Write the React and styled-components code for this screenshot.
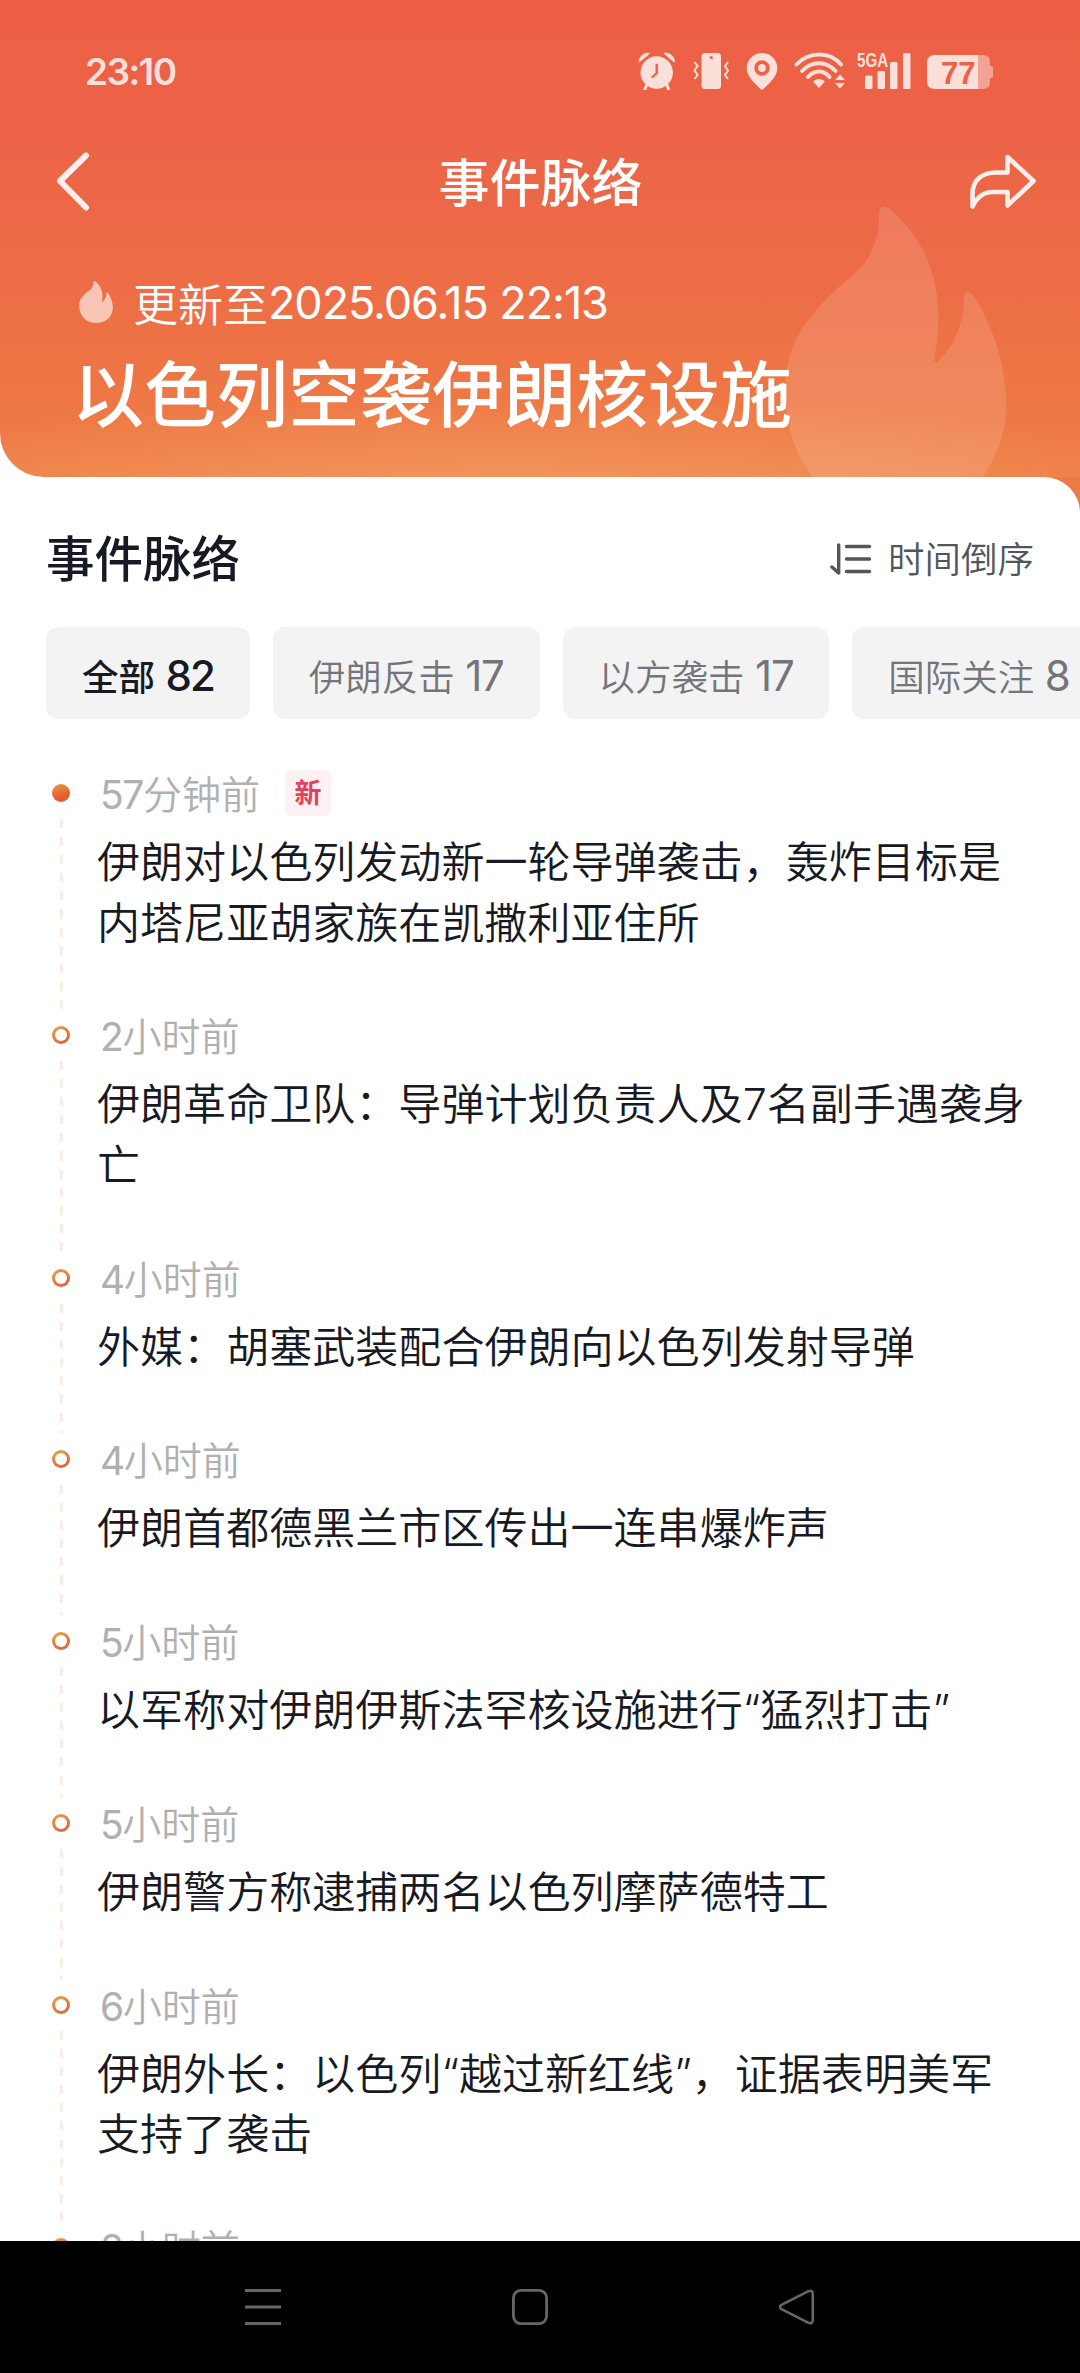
import styled, { createGlobalStyle, css } from "styled-components";

const tabs = [
  { name: "全部", count: 82, active: true },
  { name: "伊朗反击", count: 17 },
  { name: "以方袭击", count: 17 },
  { name: "国际关注", count: 8 },
];

const events = [
  {
    num: "57",
    unit: "分钟前",
    isNew: true,
    title: "伊朗对以色列发动新一轮导弹袭击，轰炸目标是内塔尼亚胡家族在凯撒利亚住所",
  },
  { num: "2", unit: "小时前", title: "伊朗革命卫队：导弹计划负责人及7名副手遇袭身亡" },
  { num: "4", unit: "小时前", title: "外媒：胡塞武装配合伊朗向以色列发射导弹" },
  { num: "4", unit: "小时前", title: "伊朗首都德黑兰市区传出一连串爆炸声" },
  { num: "5", unit: "小时前", title: "以军称对伊朗伊斯法罕核设施进行“猛烈打击”" },
  { num: "5", unit: "小时前", title: "伊朗警方称逮捕两名以色列摩萨德特工" },
  { num: "6", unit: "小时前", title: "伊朗外长：以色列“越过新红线”，证据表明美军支持了袭击" },
  { num: "8", unit: "小时前", title: "" },
];

const FLAME =
  "M290 0C276 0 273 10 273 22C274 60 272 92 243 148C222 190 183 210 132 260C70 320 0 400 -8 520C-16 640 20 745 90 830C150 900 240 930 325 930C430 930 530 890 585 810C640 730 656 660 655 580C654 470 612 350 558 268C552 258 546 254 540 254C533 254 529 260 529 270C529 340 505 410 452 463C446 470 439 469 439 460C439 446 452 400 452 330C452 220 415 100 310 10C304 4 298 0 290 0Z";

function FlameIcon() {
  return (
    <svg viewBox="-12 0 670 930" width="100%" height="100%" preserveAspectRatio="none">
      <path d={FLAME} fill="#fff" />
    </svg>
  );
}

function StatusIcons() {
  return (
    <IconGroup>
      <svg width="38" height="38" viewBox="0 0 38 38" fill="#fbdfd9">
        <circle cx="18.7" cy="20.5" r="16.2" />
        <path d="M1 10A9 9 0 0 1 11.5 1.200Q8 5 1 10ZM36.500 10A9 9 0 0 0 26 1.200Q29.500 5 36.500 10Z" stroke="#fbdfd9" strokeWidth="1" />
        <path d="M9 32L7 37M28.500 32L30.500 37" stroke="#fbdfd9" strokeWidth="3" strokeLinecap="round" />
        <path d="M18.700 13V21L14.500 25" stroke="#ec6147" strokeWidth="2.400" fill="none" strokeLinecap="round" />
      </svg>
      <Gap w={17} />
      <svg width="37" height="38" viewBox="0 0 37 38">
        <rect x="8.500" y="1" width="19.500" height="36" rx="3.500" fill="#fbdfd9" />
        <circle cx="18.300" cy="5.500" r="1.600" fill="#ec6147" />
        <path d="M1.500 10L4.500 14L1.500 18.500L4.500 23L1.500 27M35 10L32 14L35 18.500L32 23L35 27" stroke="#fbdfd9" strokeWidth="2" fill="none" />
      </svg>
      <Gap w={16} />
      <svg width="32" height="38" viewBox="0 0 32 38">
        <path d="M16 1A15.300 15.300 0 0 0 .7 16.300C.7 24 7 29.500 14.500 37Q16 38.500 17.500 37C25 29.500 31.300 24 31.300 16.300A15.300 15.300 0 0 0 16 1Z" fill="#fbdfd9" />
        <circle cx="16" cy="16" r="5.800" fill="#fbdfd9" stroke="#ec6147" strokeWidth="3.800" />
      </svg>
      <Gap w={16} />
      <svg width="52" height="38" viewBox="0 0 52 38" fill="none" stroke="#fbdfd9" strokeWidth="4" strokeLinecap="round">
        <path d="M2.500 12.500C15 -.8 36 -.8 47 12.500" />
        <path d="M8 19C17.500 8.500 32.500 8.500 41.500 19" />
        <path d="M14 25C20.500 17.500 29.500 17.500 35.500 25" />
        <path d="M20 29.500Q25 26 30 29.500L25 35Z" fill="#fbdfd9" strokeWidth="1.500" strokeLinejoin="round" />
        <path d="M41 28L46 22.500L51 28ZM41 31L46 36.500L51 31Z" fill="#fbdfd9" stroke="none" />
      </svg>
      <Gap w={11} />
      <SignalWrap>
        <NetworkLabel>5GA</NetworkLabel>
        <svg width="54" height="38" viewBox="0 0 54 38" fill="#fbdfd9">
          <rect x="8" y="23.500" width="7.500" height="13.500" rx="1.500" />
          <rect x="20.500" y="19" width="7.500" height="18" rx="1.500" />
          <rect x="33" y="10" width="7.500" height="27" rx="1.500" />
          <rect x="46" y="1" width="7.500" height="36" rx="1.500" />
        </svg>
      </SignalWrap>
      <Gap w={16} />
      <svg width="66" height="38" viewBox="0 0 66 38">
        <path d="M51 3H56Q63 3 63 10V14H64.500Q66 14 66 16V24Q66 26 64.500 26H63V30Q63 37 56 37H51Z" fill="#f4a295" />
        <path d="M8 3H51V37H8Q0 37 0 29V11Q0 3 8 3Z" fill="#fbdfd9" />
        <text x="14" y="31.500" fontSize="31" fontWeight="700" fontFamily="Liberation Sans, sans-serif" fill="#ec6147">77</text>
      </svg>
    </IconGroup>
  );
}

export default function App() {
  return (
    <>
      <GlobalStyle />
      <Screen>
        <Header>
          <BigFlame>
            <FlameIcon />
          </BigFlame>
          <StatusBar>
            <Clock>23:10</Clock>
            <StatusIcons />
          </StatusBar>
          <NavBar>
            <svg width="36" height="60" viewBox="0 0 36 60" fill="none" stroke="#ffeeeb" strokeWidth="6" strokeLinecap="round" strokeLinejoin="round">
              <path d="M31 3.500L5 29L31 55.500" />
            </svg>
            <NavTitle>事件脉络</NavTitle>
            <svg width="68" height="60" viewBox="0 0 68 60" fill="none" stroke="#ffeeeb" strokeWidth="4.600" strokeLinejoin="round">
              <path d="M3.500 54.500V42C3.500 28 13 20.500 27 20.500H38.500V5L64.500 29L38.500 53.500V40H24C14 40 8 45 3.500 54.500Z" />
            </svg>
          </NavBar>
          <Updated>
            <SmallFlame>
              <FlameIcon />
            </SmallFlame>
            更新至<Num $gap="-1.1px">2025.06.15 22:13</Num>
          </Updated>
          <Headline>以色列空袭伊朗核设施</Headline>
        </Header>
        <PanelWrap>
          <Panel>
            <PanelHead>
              <PanelTitle>事件脉络</PanelTitle>
              <Sort>
                <svg width="42" height="34" viewBox="0 0 42 34" fill="none" stroke="#51555e" strokeWidth="3.400" strokeLinecap="round" strokeLinejoin="round">
                  <path d="M8.700 3V31L2 25M16.500 4.500H39.500M16.500 17H39.500M16.500 29.500H39.500" />
                </svg>
                <SortLabel>时间倒序</SortLabel>
              </Sort>
            </PanelHead>
            <Tabs>
              {tabs.map((tab) => (
                <Tab key={tab.name} $active={tab.active}>
                  {tab.name}
                  <TabCount $active={tab.active}>{tab.count}</TabCount>
                </Tab>
              ))}
            </Tabs>
            <Timeline>
              {events.map((item, i) => (
                <Event key={i}>
                  <Rail>
                    <Dot $filled={i === 0} />
                    <Dashes />
                  </Rail>
                  <EventBody>
                    <EventTime>
                      <TimeText>
                        <Num $gap="-1.4px">{item.num}</Num>
                        {item.unit}
                      </TimeText>
                      {item.isNew && <NewTag>新</NewTag>}
                    </EventTime>
                    <EventTitle>{item.title}</EventTitle>
                  </EventBody>
                </Event>
              ))}
            </Timeline>
          </Panel>
        </PanelWrap>
        <SystemBar>
          <svg width="36" height="36" viewBox="0 0 36 36" stroke="#666" strokeWidth="3">
            <path d="M0 1.500H36M0 18H36M0 34.500H36" />
          </svg>
          <svg width="36" height="36" viewBox="0 0 36 36" fill="none" stroke="#666" strokeWidth="2.800">
            <rect x="1.400" y="1.400" width="33.200" height="33.200" rx="7.500" />
          </svg>
          <svg width="36" height="36" viewBox="0 0 36 36" fill="none" stroke="#666" strokeWidth="2.600" strokeLinejoin="round">
            <path d="M2.500 15.800L29.500 2.200Q33.800 .8 33.800 5V31Q33.800 35.200 29.500 33.800L2.500 20.200Q-.5 18 2.500 15.800Z" />
          </svg>
        </SystemBar>
      </Screen>
    </>
  );
}

const GlobalStyle = createGlobalStyle`
  * {
    box-sizing: border-box;
  }

  body {
    margin: 0;
    background: #fff;
    font-family: Inter, "Noto Sans CJK SC", sans-serif;
  }

  svg {
    display: block;
    flex-shrink: 0;
  }
`;

const Screen = styled.div`
  width: 1080px;
  height: 2373px;
  display: flex;
  flex-direction: column;
  overflow: hidden;
  background: #fff;
`;

const Header = styled.header`
  position: relative;
  height: 477px;
  flex-shrink: 0;
  overflow: hidden;
  color: #fff;
  border-bottom-left-radius: 44px;
  background:
    radial-gradient(ellipse 720px 100px at 47% 104%, rgba(242, 158, 98, 0.85), rgba(242, 150, 88, 0) 100%),
    linear-gradient(#ec5f46 0%, #ec6347 28%, #ed6d46 60%, #ee7845 85%, #ef7d47 100%);
`;

const BigFlame = styled.div`
  position: absolute;
  left: 784px;
  top: 207px;
  width: 223px;
  height: 310px;
  opacity: 0.12;
`;

const StatusBar = styled.div`
  height: 142px;
  padding: 0 87px 0 85px;
  display: flex;
  align-items: center;
  justify-content: space-between;
`;

const Clock = styled.div`
  font-size: 37px;
  font-weight: 600;
  letter-spacing: -1.6px;
  color: #fbdfd9;
`;

const IconGroup = styled.div`
  display: flex;
  align-items: center;
`;

const Gap = styled.span`
  width: ${({ w }) => w}px;
`;

const SignalWrap = styled.div`
  position: relative;
`;

const NetworkLabel = styled.span`
  position: absolute;
  left: 0;
  top: -2px;
  font-family: "Liberation Sans", sans-serif;
  font-size: 20.5px;
  line-height: 20px;
  font-weight: 700;
  color: #fbdfd9;
  transform: scaleX(0.74);
  transform-origin: left;
`;

const NavBar = styled.div`
  height: 80px;
  padding: 0 43px 0 55px;
  display: flex;
  align-items: center;
  justify-content: space-between;
`;

const NavTitle = styled.h1`
  margin: 4px 0 0 21px;
  font-size: 51px;
  line-height: 60px;
  font-weight: 500;
`;

const Updated = styled.div`
  height: 62px;
  margin-top: 49px;
  padding-left: 79px;
  display: flex;
  align-items: center;
  font-size: 45px;
  font-weight: 350;
  white-space: pre;
`;

const SmallFlame = styled.div`
  width: 34px;
  height: 42px;
  margin-right: 20px;
  opacity: 0.6;
`;

const Num = styled.span`
  font-weight: 400;
  letter-spacing: ${({ $gap }) => $gap};
`;

const Headline = styled.h2`
  margin: 12px 0 0 72px;
  font-size: 72px;
  line-height: 100px;
  font-weight: 500;
  white-space: nowrap;
`;

const PanelWrap = styled.div`
  height: 1764px;
  flex-shrink: 0;
  background: linear-gradient(90deg, #fff 50%, #ee7a46 50%);
`;

const Panel = styled.main`
  height: 100%;
  padding-top: 50px;
  overflow: hidden;
  background: #fff;
  border-top-right-radius: 36px;
`;

const PanelHead = styled.div`
  height: 64px;
  padding: 0 46px;
  display: flex;
  align-items: center;
  justify-content: space-between;
`;

const PanelTitle = styled.h3`
  margin: 2px 0 0;
  font-size: 48.5px;
  line-height: 60px;
  font-weight: 500;
  color: #171a24;
`;

const Sort = styled.div`
  display: flex;
  align-items: center;
  gap: 16px;
  font-size: 36.5px;
  color: #51555e;
`;

const SortLabel = styled.span`
  margin-top: -4px;
  font-weight: 350;
`;

const Tabs = styled.div`
  margin-top: 36px;
  padding-left: 46px;
  display: flex;
  gap: 23px;
`;

const Tab = styled.div`
  height: 92px;
  padding: 4px 36px 0;
  display: flex;
  flex-shrink: 0;
  align-items: center;
  gap: 10.5px;
  border-radius: 12px;
  background: #f3f3f3;
  color: #74757b;
  font-size: 36.5px;
  font-weight: 350;
  white-space: nowrap;
  ${({ $active }) =>
    $active &&
    css`
      color: #171a24;
      font-weight: 500;
    `}
`;

const TabCount = styled.span`
  font-size: 42px;
  font-weight: ${({ $active }) => ($active ? 500 : 400)};
  letter-spacing: ${({ $active }) => ($active ? "-2px" : "-1.3px")};
`;

const Timeline = styled.div`
  margin-top: 51px;
`;

const Event = styled.div`
  display: flex;
  padding-left: 52px;
`;

const Rail = styled.div`
  width: 18px;
  flex-shrink: 0;
  padding-top: 14px;
  display: flex;
  flex-direction: column;
  align-items: center;
`;

const Dot = styled.div`
  width: 18px;
  height: 18px;
  flex-shrink: 0;
  border-radius: 50%;
  border: 3.5px solid transparent;
  background: ${({ $filled }) =>
    $filled
      ? "linear-gradient(160deg, #eb9a45, #e8592e 70%) border-box"
      : "linear-gradient(#fff, #fff) padding-box, linear-gradient(150deg, #e6a548, #df5a3c) border-box"};
`;

const Dashes = styled.div`
  width: 3px;
  flex: 1;
  margin: 17px 0 3px;
  background: repeating-linear-gradient(#f9ece1 0 9px, transparent 9px 18.1px);
`;

const EventBody = styled.div`
  width: 937px;
  margin-left: 27px;
  padding-bottom: 58.3px;
`;

const EventTime = styled.div`
  height: 46px;
  padding-left: 3px;
  display: flex;
  align-items: center;
  font-size: 39px;
  line-height: 46px;
  font-weight: 350;
  color: #b0b0b3;
`;

const TimeText = styled.span`
  margin-top: 4px;
`;

const NewTag = styled.span`
  width: 46px;
  height: 46px;
  margin-left: 25px;
  border-radius: 6px;
  background: #fdf1f3;
  color: #e3425b;
  font-size: 27px;
  line-height: 48px;
  font-weight: 700;
  text-align: center;
`;

const EventTitle = styled.p`
  margin: 16px 0 1px;
  min-height: 60.5px;
  font-size: 43.05px;
  line-height: 60.5px;
  font-weight: 350;
  color: #171a24;
`;

const SystemBar = styled.footer`
  height: 132px;
  flex-shrink: 0;
  padding-left: 245px;
  display: flex;
  align-items: center;
  gap: 231px;
  background: #000;
`;
